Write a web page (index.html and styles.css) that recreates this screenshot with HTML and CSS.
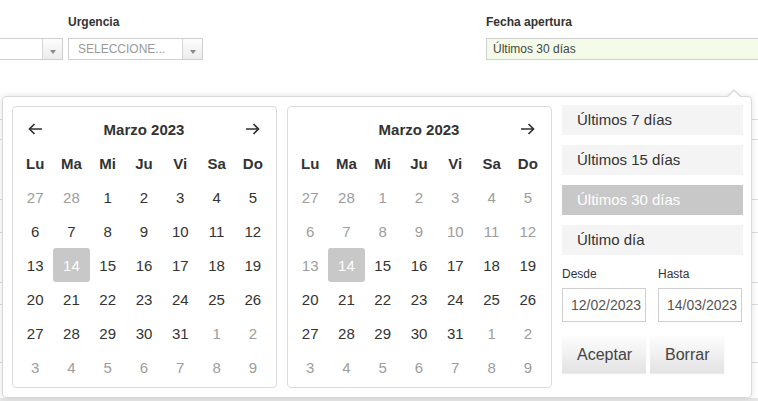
FILE: index.html
```html
<!DOCTYPE html>
<html lang="es">
<head>
<meta charset="utf-8">
<title>Filtro fecha</title>
<link rel="stylesheet" href="styles.css">
</head>
<body>
<div class="page">
  <div class="filters">
    <div class="field f-first">
      <div class="lbl">&nbsp;</div>
      <div class="select"><span class="sel-text"></span><span class="sel-btn"><i class="caret"></i></span></div>
    </div>
    <div class="field f-urg">
      <div class="lbl">Urgencia</div>
      <div class="select"><span class="sel-text placeholder">SELECCIONE...</span><span class="sel-btn"><i class="caret"></i></span></div>
    </div>
    <div class="field f-fecha">
      <div class="lbl">Fecha apertura</div>
      <div class="date-input">Últimos 30 días</div>
    </div>
  </div>

  <div class="results">
    <div class="row r1"></div>
    <div class="row r2"></div>
    <div class="row r3"></div>
    <div class="row r4"></div>
    <div class="row r5"></div>
    <div class="row r6"></div>
    <div class="row r7"></div>
    <div class="row r8"></div>
    <div class="band"></div>
  </div>

  <div class="picker">
    <div class="cal">
      <div class="nav"><svg width="15" height="12" viewBox="0 0 15 12"><path d="M14 6H1.5M6.5 1L1.5 6l5 5" fill="none" stroke="#333" stroke-width="1.7"/></svg></div>
      <div class="title">Marzo 2023</div>
      <div class="nav"><svg width="15" height="12" viewBox="0 0 15 12"><path d="M1 6h12.5M8.5 1l5 5-5 5" fill="none" stroke="#333" stroke-width="1.7"/></svg></div>
      <div class="wd">Lu</div><div class="wd">Ma</div><div class="wd">Mi</div><div class="wd">Ju</div><div class="wd">Vi</div><div class="wd">Sa</div><div class="wd">Do</div>
      <div class="d off">27</div><div class="d off">28</div><div class="d">1</div><div class="d">2</div><div class="d">3</div><div class="d">4</div><div class="d">5</div>
      <div class="d">6</div><div class="d">7</div><div class="d">8</div><div class="d">9</div><div class="d">10</div><div class="d">11</div><div class="d">12</div>
      <div class="d">13</div><div class="d sel">14</div><div class="d">15</div><div class="d">16</div><div class="d">17</div><div class="d">18</div><div class="d">19</div>
      <div class="d">20</div><div class="d">21</div><div class="d">22</div><div class="d">23</div><div class="d">24</div><div class="d">25</div><div class="d">26</div>
      <div class="d">27</div><div class="d">28</div><div class="d">29</div><div class="d">30</div><div class="d">31</div><div class="d off">1</div><div class="d off">2</div>
      <div class="d off">3</div><div class="d off">4</div><div class="d off">5</div><div class="d off">6</div><div class="d off">7</div><div class="d off">8</div><div class="d off">9</div>
    </div>

    <div class="cal">
      <div class="nav"></div>
      <div class="title">Marzo 2023</div>
      <div class="nav"><svg width="15" height="12" viewBox="0 0 15 12"><path d="M1 6h12.5M8.5 1l5 5-5 5" fill="none" stroke="#333" stroke-width="1.7"/></svg></div>
      <div class="wd">Lu</div><div class="wd">Ma</div><div class="wd">Mi</div><div class="wd">Ju</div><div class="wd">Vi</div><div class="wd">Sa</div><div class="wd">Do</div>
      <div class="d off">27</div><div class="d off">28</div><div class="d off">1</div><div class="d off">2</div><div class="d off">3</div><div class="d off">4</div><div class="d off">5</div>
      <div class="d off">6</div><div class="d off">7</div><div class="d off">8</div><div class="d off">9</div><div class="d off">10</div><div class="d off">11</div><div class="d off">12</div>
      <div class="d off">13</div><div class="d sel">14</div><div class="d">15</div><div class="d">16</div><div class="d">17</div><div class="d">18</div><div class="d">19</div>
      <div class="d">20</div><div class="d">21</div><div class="d">22</div><div class="d">23</div><div class="d">24</div><div class="d">25</div><div class="d">26</div>
      <div class="d">27</div><div class="d">28</div><div class="d">29</div><div class="d">30</div><div class="d">31</div><div class="d off">1</div><div class="d off">2</div>
      <div class="d off">3</div><div class="d off">4</div><div class="d off">5</div><div class="d off">6</div><div class="d off">7</div><div class="d off">8</div><div class="d off">9</div>
    </div>

    <div class="ranges">
      <div class="range">Últimos 7 días</div>
      <div class="range">Últimos 15 días</div>
      <div class="range active">Últimos 30 días</div>
      <div class="range">Último día</div>
      <div class="dates">
        <div class="date-col">
          <div class="dlbl">Desde</div>
          <div class="dinput">12/02/2023</div>
        </div>
        <div class="date-col">
          <div class="dlbl">Hasta</div>
          <div class="dinput">14/03/2023</div>
        </div>
      </div>
      <div class="actions">
        <div class="btn btn-ok">Aceptar</div>
        <div class="btn btn-clear">Borrar</div>
      </div>
    </div>
  </div>
</div>
</body>
</html>
```

FILE: styles.css
```css
* { box-sizing: border-box; }
html, body {
  margin: 0;
  padding: 0;
  background: #fff;
}
body {
  font-family: "Liberation Sans", Arial, sans-serif;
  color: #333;
}
.page {
  position: relative;
  width: 758px;
  height: 401px;
  overflow: hidden;
}

/* filter bar */
.filters {
  display: flex;
  padding-top: 14px;
  height: 60px;
}
.field {
  display: flex;
  flex-direction: column;
  gap: 8px;
  flex-shrink: 0;
}
.lbl {
  font-size: 12px;
  font-weight: bold;
  line-height: 16px;
  color: #333;
  white-space: nowrap;
}
.f-first { width: 143px; margin-left: -80px; }
.f-urg { width: 135px; margin-left: 5px; }
.f-fecha { margin-left: 283px; width: 300px; }

.select {
  display: flex;
  height: 22px;
  border: 1px solid #cfcfcf;
  background: #fff;
}
.sel-text {
  flex: 1;
  font-size: 12px;
  line-height: 20px;
  padding-left: 9px;
  color: #999;
  white-space: nowrap;
  overflow: hidden;
}
.sel-btn {
  width: 20px;
  border-left: 1px solid #d6d6d6;
  background: linear-gradient(#fdfdfd, #ececec);
  display: flex;
  justify-content: center;
  align-items: flex-end;
  padding-bottom: 5px;
}
.caret {
  width: 0;
  height: 0;
  border-left: 3px solid transparent;
  border-right: 3px solid transparent;
  border-top: 4px solid #8a8a8a;
}
.date-input {
  height: 22px;
  border: 1px solid #cfcfcf;
  background: #f4fce9;
  font-size: 12px;
  line-height: 20px;
  padding-left: 6px;
  color: #444;
}

/* background table */
.results {
  display: flex;
  flex-direction: column;
}
.row { border-bottom: 1px solid #dcdcdc; flex-shrink: 0; }
.r1 { height: 60px; }
.r2 { height: 20px; }
.r3 { height: 60px; }
.r4 { height: 33px; }
.r5 { height: 50px; }
.r6 { height: 22px; }
.r7 { height: 58px; }
.r8 { height: 35px; border-bottom: none; }
.band { height: 10px; background: #e6e6e6; flex-shrink: 0; }

/* date picker popover */
.picker {
  position: absolute;
  left: 2px;
  top: 96px;
  width: 750px;
  height: 302px;
  background: #fff;
  border: 1px solid #d9d9d9;
  border-radius: 4px;
  box-shadow: 0 0 6px rgba(0, 0, 0, 0.12);
  display: flex;
  gap: 10px;
  padding: 9px 8px 0 9px;
}
.picker::before,
.picker::after {
  content: "";
  position: absolute;
  width: 0;
  height: 0;
  border-left: 7px solid transparent;
  border-right: 7px solid transparent;
}
.picker::before {
  right: 10px;
  top: -8px;
  border-bottom: 7px solid #d9d9d9;
}
.picker::after {
  right: 10px;
  top: -6px;
  border-bottom: 7px solid #fff;
}

.cal {
  width: 265px;
  height: 282px;
  border: 1px solid #dcdcdc;
  border-radius: 4px;
  padding: 5px 5px 3px 4px;
  display: grid;
  grid-template-columns: repeat(7, 1fr);
  grid-auto-rows: 34px;
  font-size: 15px;
}
.nav {
  display: flex;
  align-items: center;
  justify-content: center;
}
.title {
  grid-column: span 5;
  display: flex;
  align-items: center;
  justify-content: center;
  font-weight: bold;
  color: #333;
}
.wd {
  display: flex;
  align-items: center;
  justify-content: center;
  font-weight: bold;
  color: #333;
}
.d {
  display: flex;
  align-items: center;
  justify-content: center;
  color: #333;
}
.d.off { color: #9d9d9d; }
.d.sel {
  background: #c8c8c8;
  color: #fff;
  border-radius: 3px;
}

.ranges {
  width: 181px;
  margin-top: -1px;
  display: flex;
  flex-direction: column;
}
.range {
  height: 30px;
  margin-bottom: 10px;
  background: #f4f4f4;
  font-size: 15px;
  line-height: 30px;
  padding-left: 15px;
  color: #333;
  white-space: nowrap;
}
.range.active {
  background: #c8c8c8;
  color: #fff;
}
.range:nth-child(4) { margin-bottom: 0; }

.dates {
  display: flex;
  gap: 12px;
  margin-top: 11px;
}
.date-col {
  display: flex;
  flex-direction: column;
  gap: 6px;
}
.dlbl {
  font-size: 12px;
  line-height: 16px;
  color: #333;
}
.dinput {
  width: 84px;
  height: 34px;
  border: 1px solid #cfcfcf;
  font-size: 14px;
  line-height: 32px;
  padding-left: 8px;
  color: #555;
}
.actions {
  display: flex;
  gap: 4px;
  margin-top: 14px;
}
.btn {
  height: 37px;
  padding: 0 15px;
  font-size: 16px;
  line-height: 37px;
  color: #444;
  background: linear-gradient(#fdfdfd, #e3e3e3);
  box-shadow: 0 1px 1px rgba(0, 0, 0, 0.08);
}
.btn-ok { width: 84px; }
.btn-clear { width: 74px; }
```
